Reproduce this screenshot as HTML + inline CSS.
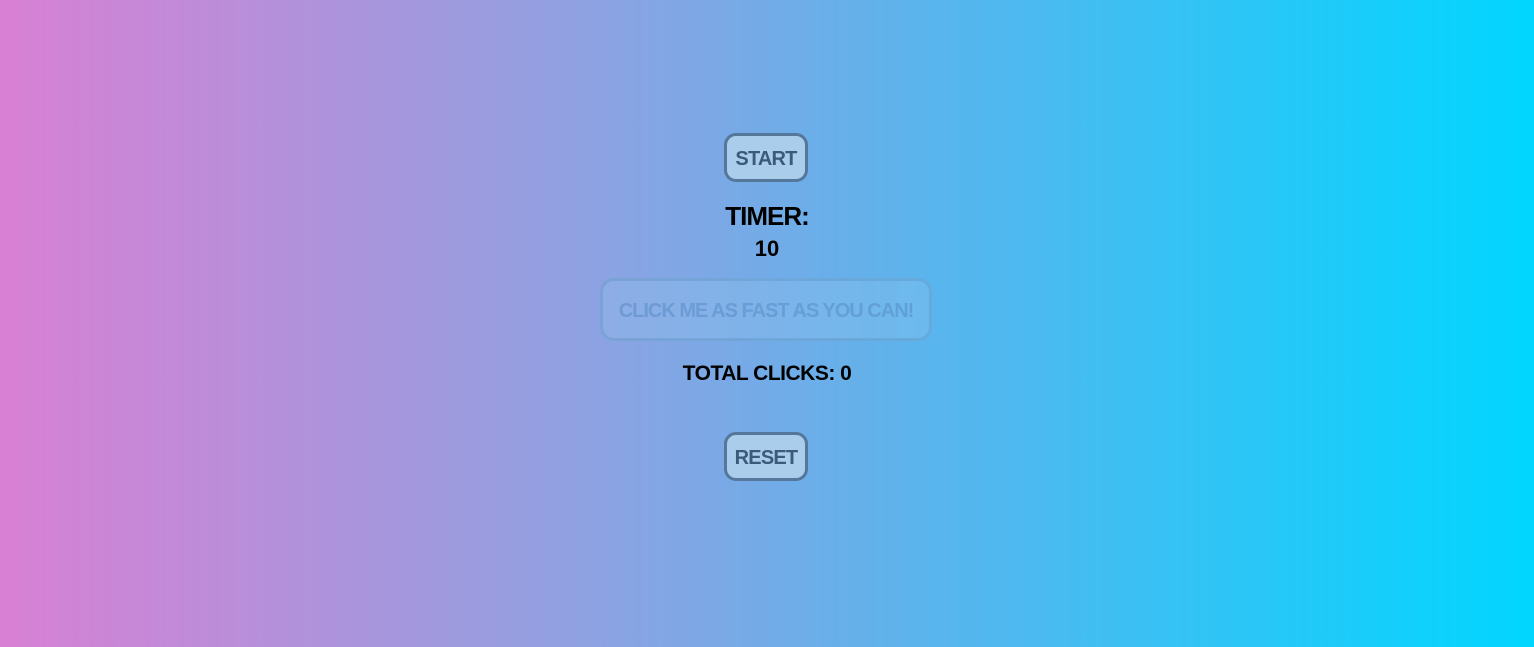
<!DOCTYPE html>
<html><head><style>
html,body{margin:0;width:1534px;height:647px;overflow:hidden}
body{background:linear-gradient(to right,#d880d4 0%,#8aa3e2 40%,#50b8ef 65%,#00d6ff 100%);font-family:"Liberation Sans",sans-serif;font-weight:bold;position:relative}
.b{position:absolute;box-sizing:border-box;text-align:center}
.btn{left:724px;width:84px;height:49px;border:3px solid #55789a;border-radius:12px;background:#a9cdeb;color:#3c5a7a;font-size:20px;line-height:47px;letter-spacing:-0.8px;text-transform:uppercase}
.t{left:0;width:1534px;color:#000}
</style></head><body>
<div class="b btn" style="top:133px">START</div>
<div class="b t" style="top:201px;font-size:26px;letter-spacing:-1px">TIMER:</div>
<div class="b t" style="top:236px;font-size:22px">10</div>
<div class="b" style="left:600px;top:278px;width:332px;height:63px;border:3px solid rgba(90,140,190,0.35);border-radius:14px;background:rgba(150,200,240,0.3);color:rgba(80,130,190,0.45);font-size:20px;line-height:60px;letter-spacing:-1px;text-transform:uppercase">Click me as fast as you can!</div>
<div class="b t" style="top:362px;font-size:21px;letter-spacing:-0.5px">TOTAL CLICKS: 0</div>
<div class="b btn" style="top:432px">RESET</div>
</body></html>
